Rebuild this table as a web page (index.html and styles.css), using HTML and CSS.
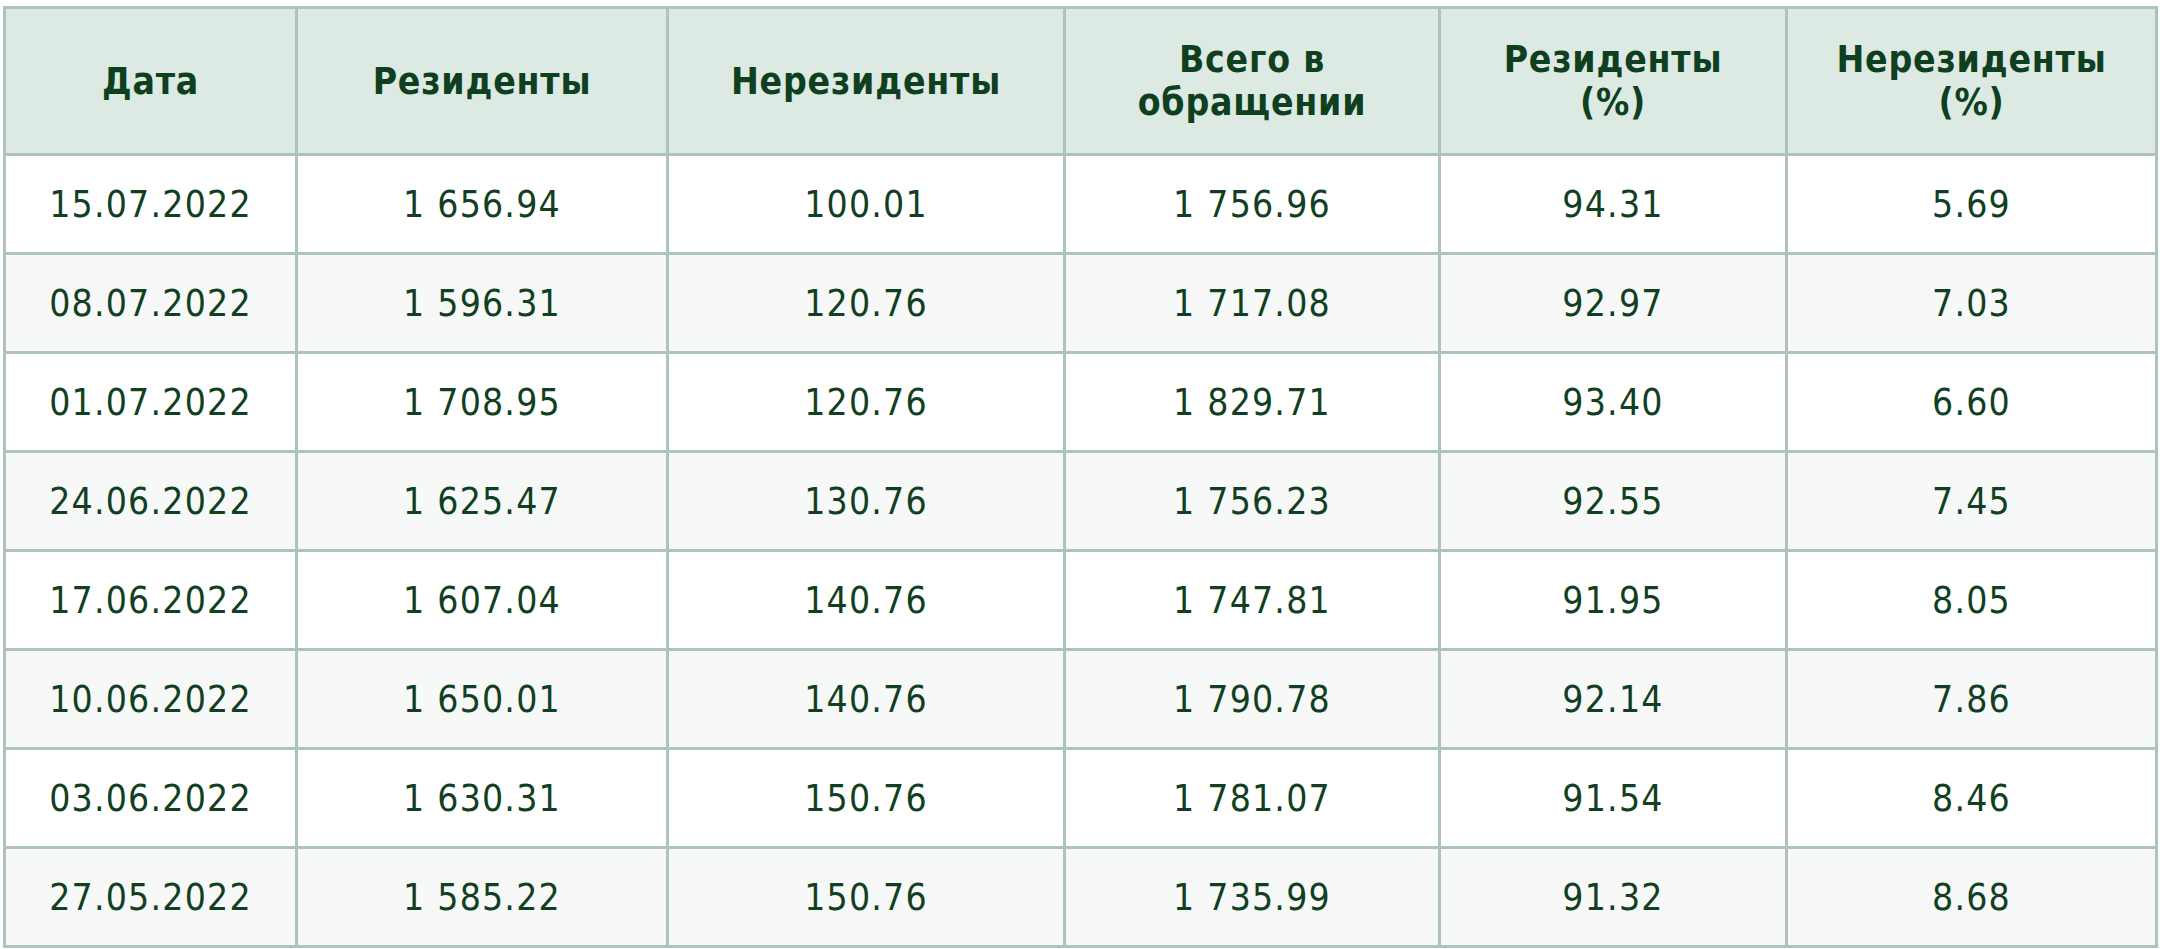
FILE: index.html
```html
<!DOCTYPE html>
<html lang="ru">
<head>
<meta charset="utf-8">
<title>Таблица</title>
<link rel="stylesheet" href="styles.css">
</head>
<body>
<table class="data">
  <colgroup>
    <col class="c1"><col class="c2"><col class="c3"><col class="c4"><col class="c5"><col class="c6">
  </colgroup>
  <thead>
    <tr>
      <th>Дата</th>
      <th>Резиденты</th>
      <th>Нерезиденты</th>
      <th>Всего в<br>обращении</th>
      <th>Резиденты<br>(%)</th>
      <th>Нерезиденты<br>(%)</th>
    </tr>
  </thead>
  <tbody>
    <tr><td>15.07.2022</td><td>1 656.94</td><td>100.01</td><td>1 756.96</td><td>94.31</td><td>5.69</td></tr>
    <tr><td>08.07.2022</td><td>1 596.31</td><td>120.76</td><td>1 717.08</td><td>92.97</td><td>7.03</td></tr>
    <tr><td>01.07.2022</td><td>1 708.95</td><td>120.76</td><td>1 829.71</td><td>93.40</td><td>6.60</td></tr>
    <tr><td>24.06.2022</td><td>1 625.47</td><td>130.76</td><td>1 756.23</td><td>92.55</td><td>7.45</td></tr>
    <tr><td>17.06.2022</td><td>1 607.04</td><td>140.76</td><td>1 747.81</td><td>91.95</td><td>8.05</td></tr>
    <tr><td>10.06.2022</td><td>1 650.01</td><td>140.76</td><td>1 790.78</td><td>92.14</td><td>7.86</td></tr>
    <tr><td>03.06.2022</td><td>1 630.31</td><td>150.76</td><td>1 781.07</td><td>91.54</td><td>8.46</td></tr>
    <tr><td>27.05.2022</td><td>1 585.22</td><td>150.76</td><td>1 735.99</td><td>91.32</td><td>8.68</td></tr>
  </tbody>
</table>
</body>
</html>
```
FILE: styles.css
```css
html, body {
  margin: 0;
  padding: 0;
  background: #ffffff;
}

body {
  padding: 6px 0 0 3px;
  font-family: "DejaVu Sans Condensed", "DejaVu Sans", sans-serif;
  font-stretch: condensed;
  color: #123f22;
}

.data {
  border-collapse: collapse;
  table-layout: fixed;
  width: 2152px;
}

.c1 { width: 292px; }
.c2 { width: 371px; }
.c3 { width: 397px; }
.c4 { width: 375px; }
.c5 { width: 347px; }
.c6 { width: 370px; }

.data th,
.data td {
  border: 3px solid #aec3b9;
  text-align: center;
  vertical-align: middle;
  padding: 0;
  font-size: 37px;
}

.data th {
  background: #dde9e3;
  font-weight: bold;
  line-height: 43px;
  height: 144px;
  letter-spacing: 0.8px;
  color: #0e3f1f;
}

.data td {
  height: 96px;
  line-height: 43px;
  font-weight: normal;
  letter-spacing: 1.2px;
}

.data tbody tr:nth-child(even) td {
  background: #f6f9f8;
}
```
